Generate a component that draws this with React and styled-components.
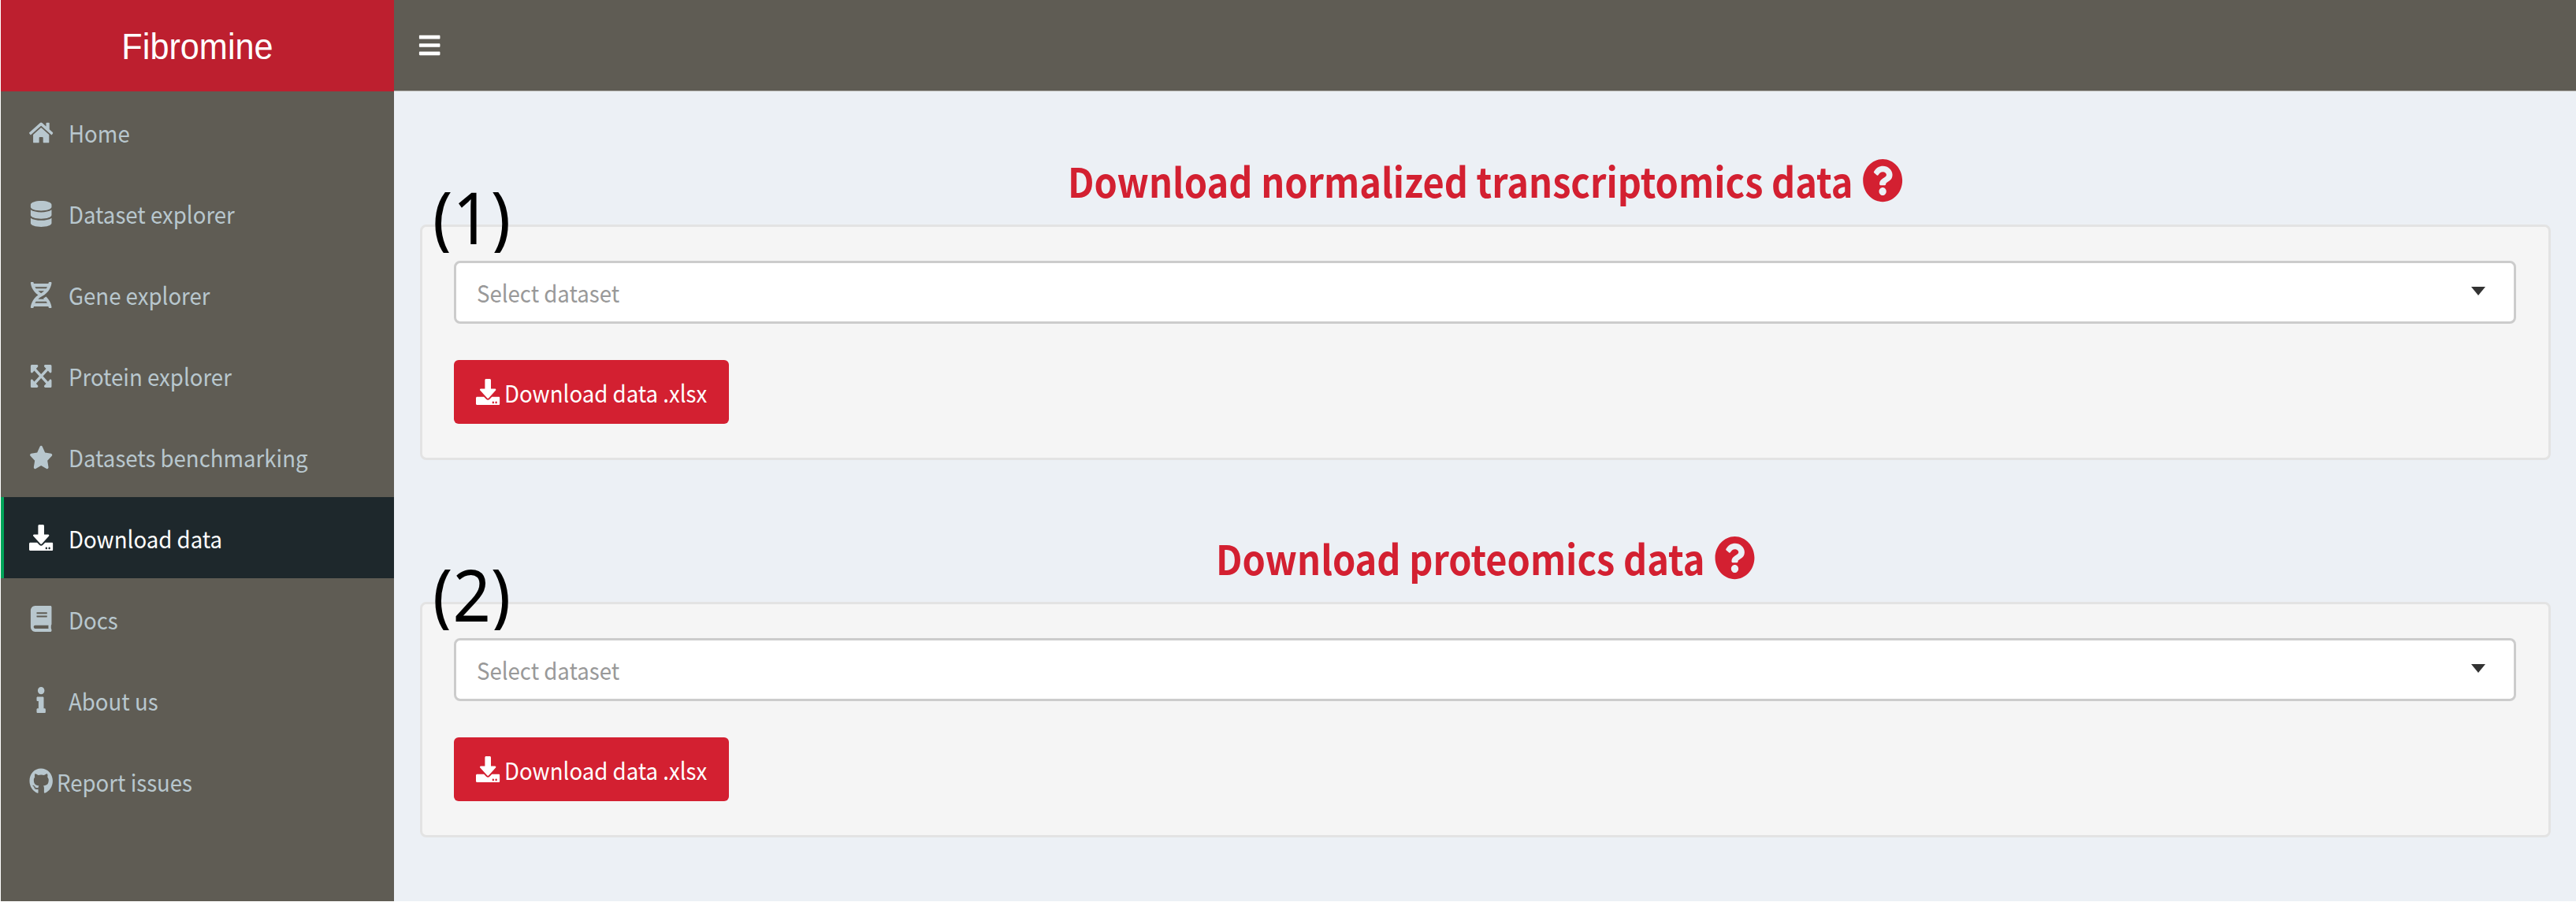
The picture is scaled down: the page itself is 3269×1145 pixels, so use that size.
import React from "react";
import styled, { createGlobalStyle, css } from "styled-components";
import {
  FaBars,
  FaBook,
  FaDatabase,
  FaDna,
  FaDownload,
  FaExpandArrowsAlt,
  FaGithub,
  FaHome,
  FaInfo,
  FaQuestionCircle,
  FaStar,
} from "react-icons/fa";

const GlobalStyle = createGlobalStyle`
  html, body {
    margin: 0;
    padding: 0;
    background: #fff;
  }
  * {
    box-sizing: border-box;
  }
`;

const bodyFont = `"Noto Sans CJK SC", "Noto Sans", sans-serif`;

// the whole screenshot is a bit narrower than it is tall
const squeeze = css`
  transform: scaleX(0.92);
  transform-origin: left center;
`;

const Page = styled.div`
  width: 3269px;
  height: 1145px;
  padding: 0 0 1px 1px;
  display: grid;
  grid-template-columns: 499px 1fr;
  grid-template-rows: 116px 1fr;
  overflow: hidden;
  font-family: ${bodyFont};
`;

const Logo = styled.div`
  background: #bd1f2f;
  color: #fff;
  font-family: "Liberation Sans", Arial, sans-serif;
  font-size: 47px;
  display: flex;
  align-items: center;
  justify-content: center;
`;

const LogoText = styled.span`
  transform: scaleX(0.92);
`;

const TopBar = styled.header`
  background: #5f5c54;
  border-bottom: 1px solid #b9b8b3;
  display: flex;
  align-items: center;
  padding-left: 30px;
  color: #fff;
  font-size: 33px;

  svg {
    ${squeeze}
  }
`;

const Sidebar = styled.nav`
  background: #5f5c54;
  padding-top: 1px;
  display: flex;
  flex-direction: column;
`;

const MenuItem = styled.div`
  height: 102.9px;
  flex: none;
  display: flex;
  align-items: center;
  padding-left: ${(p) => (p.$active ? "32px" : "36px")};
  border-left: ${(p) => (p.$active ? "4px solid #00a65a" : "none")};
  background: ${(p) => (p.$active ? "#1e282c" : "transparent")};
  color: ${(p) => (p.$active ? "#fff" : "#b8c7ce")};
  font-size: 30px;
`;

const MenuIcon = styled.span`
  width: ${(p) => p.$w || 50}px;
  flex: none;
  display: flex;
  align-items: center;
  font-size: 33px;

  svg {
    ${squeeze}
  }
`;

const Label = styled.span`
  display: inline-block;
  white-space: nowrap;
  ${squeeze}
`;

const Main = styled.main`
  background: #ecf0f5;
  padding: 0 32px 0 33px;
`;

const Section = styled.section`
  padding-top: ${(p) => p.$top}px;
`;

const Heading = styled.h3`
  margin: 0 0 21px;
  height: 70px;
  display: flex;
  align-items: center;
  justify-content: center;
  gap: 13px;
  color: #d32031;
  font-size: 51px;
  font-weight: 700;
  white-space: nowrap;
  transform: scaleX(0.92);

  svg {
    font-size: 56px;
  }
`;

const Well = styled.div`
  position: relative;
  height: 299px;
  background: #f5f5f5;
  border: 3px solid #e3e3e3;
  border-radius: 8px;
  padding: 43px 41px 0 40px;
`;

const Marker = styled.div`
  position: absolute;
  left: 13px;
  top: -49px;
  height: 82px;
  line-height: 72px;
  overflow: hidden;
  color: #000;
  font-family: "Noto Sans", sans-serif;
  font-size: 92px;
  transform: scaleX(0.92);
  transform-origin: left top;
`;

const SelectBox = styled.div`
  height: 80px;
  background: #fff;
  border: 3px solid #cccccc;
  border-radius: 8px;
  display: flex;
  align-items: center;
  justify-content: space-between;
  padding: 0 36px 0 26px;
  color: #999;
  font-size: 30px;
`;

const Caret = styled.span`
  width: 0;
  height: 0;
  margin-bottom: 3px;
  border-left: 9px solid transparent;
  border-right: 9px solid transparent;
  border-top: 11px solid #333;
`;

const DownloadButton = styled.div`
  margin-top: 46px;
  width: 349px;
  height: 81px;
  background: #d32031;
  border-radius: 6px;
  display: flex;
  align-items: center;
  padding-left: 28px;
  color: #fff;
  font-size: 30px;
`;

const ButtonIcon = styled.span`
  width: 36px;
  flex: none;
  display: flex;
  font-size: 33px;

  svg {
    ${squeeze}
  }
`;

const menu = [
  { label: "Home", icon: <FaHome /> },
  { label: "Dataset explorer", icon: <FaDatabase /> },
  { label: "Gene explorer", icon: <FaDna /> },
  { label: "Protein explorer", icon: <FaExpandArrowsAlt /> },
  { label: "Datasets benchmarking", icon: <FaStar /> },
  { label: "Download data", icon: <FaDownload />, active: true },
  { label: "Docs", icon: <FaBook /> },
  { label: "About us", icon: <FaInfo /> },
  { label: "Report issues", icon: <FaGithub />, w: 35 },
];

const DownloadCard = ({ top, title, marker }) => (
  <Section $top={top}>
    <Heading>
      {title}
      <FaQuestionCircle />
    </Heading>
    <Well>
      <Marker>{marker}</Marker>
      <SelectBox>
        <Label>Select dataset</Label>
        <Caret />
      </SelectBox>
      <DownloadButton>
        <ButtonIcon>
          <FaDownload />
        </ButtonIcon>
        <Label>Download data .xlsx</Label>
      </DownloadButton>
    </Well>
  </Section>
);

const App = () => (
  <Page>
    <GlobalStyle />
    <Logo>
      <LogoText>Fibromine</LogoText>
    </Logo>
    <TopBar>
      <FaBars />
    </TopBar>
    <Sidebar>
      {menu.map((item) => (
        <MenuItem key={item.label} $active={item.active}>
          <MenuIcon $w={item.w}>{item.icon}</MenuIcon>
          <Label>{item.label}</Label>
        </MenuItem>
      ))}
    </Sidebar>
    <Main>
      <DownloadCard
        top={78}
        title="Download normalized transcriptomics data"
        marker="(1)"
      />
      <DownloadCard top={89} title="Download proteomics data" marker="(2)" />
    </Main>
  </Page>
);

export default App;
